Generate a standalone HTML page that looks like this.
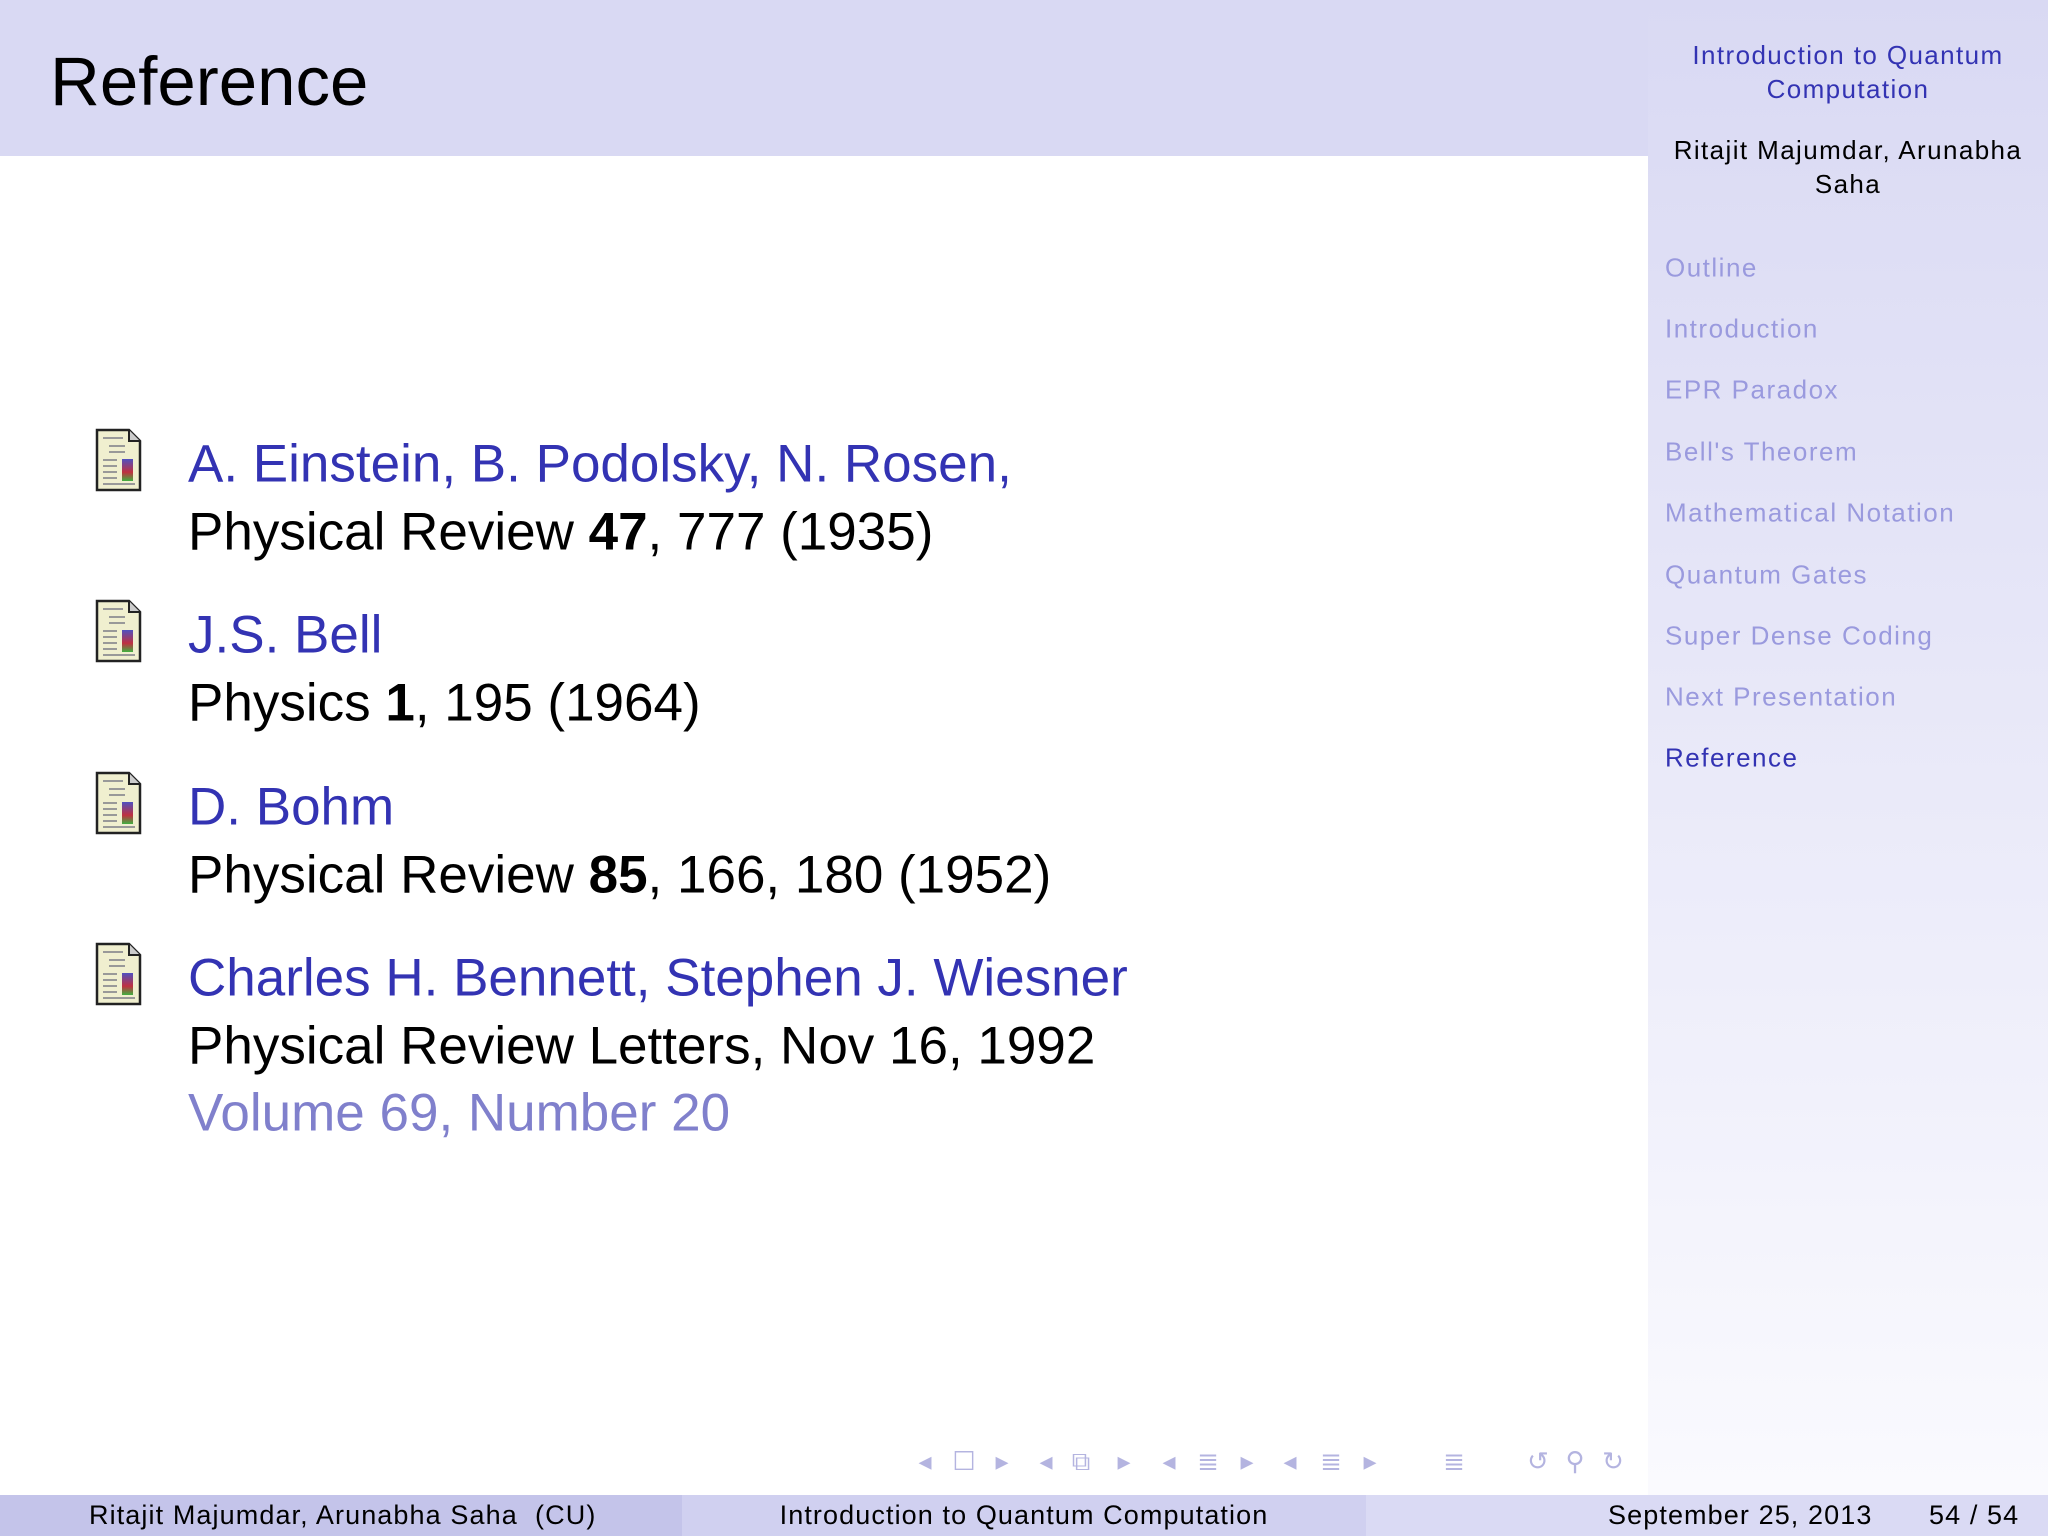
<!DOCTYPE html>
<html><head><meta charset="utf-8"><style>
*{margin:0;padding:0}
body{width:2048px;height:1536px;position:relative;background:#fff;font-family:"Liberation Sans",sans-serif;overflow:hidden}
.a{position:absolute;white-space:nowrap}
#hdr{left:0;top:0;width:1648px;height:156px;background:#d9d9f3}
#side{left:1648px;top:0;width:400px;height:1495px;background:linear-gradient(#d9d9f3 0%,#e4e4f7 35%,#fafafe 100%)}
.nav{left:1665px;font-size:26px;letter-spacing:1.5px;color:#9a9ade;transform:translateY(-50%)}
.ln{left:188px;font-size:53px;transform:translateY(-50%);color:#000}
.bl{color:#3333b3}
.ft{top:1495px;height:41px;line-height:41px;font-size:27px;letter-spacing:1.1px;color:#000}
.ic{position:absolute;left:95px;width:47px;height:64px}
.ni{position:absolute;top:1446px;font-size:26px;color:#b4b4e0;transform:translateX(-50%)}
</style></head><body>
<div class="a" id="hdr"></div>
<div class="a" style="left:50px;top:42px;font-size:69px;color:#000">Reference</div>
<div class="a" id="side"></div>
<div class="a" style="left:1648px;width:400px;top:38px;text-align:center;font-size:26px;letter-spacing:1.4px;line-height:34px;color:#3333b3;white-space:normal">Introduction to Quantum<br>Computation</div>
<div class="a" style="left:1648px;width:400px;top:133px;text-align:center;font-size:26px;letter-spacing:1.4px;line-height:34px;color:#000;white-space:normal">Ritajit Majumdar, Arunabha<br>Saha</div>
<div class="a nav" style="top:268px">Outline</div>
<div class="a nav" style="top:329px">Introduction</div>
<div class="a nav" style="top:390px">EPR Paradox</div>
<div class="a nav" style="top:452px">Bell's Theorem</div>
<div class="a nav" style="top:513px">Mathematical Notation</div>
<div class="a nav" style="top:575px">Quantum Gates</div>
<div class="a nav" style="top:636px">Super Dense Coding</div>
<div class="a nav" style="top:697px">Next Presentation</div>
<div class="a nav" style="top:758px;color:#3333b3">Reference</div>

<svg width="0" height="0" style="position:absolute"><defs>
<linearGradient id="g" x1="0" y1="0" x2="0" y2="1"><stop offset="0" stop-color="#5050c0"/><stop offset=".6" stop-color="#c03040"/><stop offset="1" stop-color="#40b040"/></linearGradient>
<g id="doc"><path d="M2 2H34L45 13V62H2Z" fill="#f0efcf" stroke="#222" stroke-width="2.5"/><path d="M34 2V13H45" fill="#ccc" stroke="#222" stroke-width="2"/>
<g stroke="#999" stroke-width="2"><path d="M8 10H28M14 18H30M14 24H30M8 32H22M8 38H22M8 44H22M8 50H22M8 56H40"/></g><rect x="27" y="31" width="11" height="22" fill="url(#g)"/></g></defs></svg>
<svg class="ic" style="top:428px"><use href="#doc"/></svg>
<svg class="ic" style="top:599px"><use href="#doc"/></svg>
<svg class="ic" style="top:771px"><use href="#doc"/></svg>
<svg class="ic" style="top:942px"><use href="#doc"/></svg>

<div class="a ln bl" style="top:464px">A. Einstein, B. Podolsky, N. Rosen,</div>
<div class="a ln" style="top:532px">Physical Review <b>47</b>, 777 (1935)</div>
<div class="a ln bl" style="top:635px">J.S. Bell</div>
<div class="a ln" style="top:703px">Physics <b>1</b>, 195 (1964)</div>
<div class="a ln bl" style="top:807px">D. Bohm</div>
<div class="a ln" style="top:875px">Physical Review <b>85</b>, 166, 180 (1952)</div>
<div class="a ln bl" style="top:978px">Charles H. Bennett, Stephen J. Wiesner</div>
<div class="a ln" style="top:1046px">Physical Review Letters, Nov 16, 1992</div>
<div class="a ln" style="top:1113px;color:#8080cc">Volume 69, Number 20</div>

<span class="ni" style="left:925px">◂</span><span class="ni" style="left:964px">☐</span><span class="ni" style="left:1002px">▸</span>
<span class="ni" style="left:1046px">◂</span><span class="ni" style="left:1081px">⧉</span><span class="ni" style="left:1124px">▸</span>
<span class="ni" style="left:1169px">◂</span><span class="ni" style="left:1208px">≣</span><span class="ni" style="left:1247px">▸</span>
<span class="ni" style="left:1290px">◂</span><span class="ni" style="left:1331px">≣</span><span class="ni" style="left:1370px">▸</span>
<span class="ni" style="left:1454px">≣</span>
<span class="ni" style="left:1538px">↺</span><span class="ni" style="left:1575px">⚲</span><span class="ni" style="left:1613px">↻</span>

<div class="a ft" style="left:0;width:682px;background:#c4c4ea"><span style="margin-left:89px">Ritajit Majumdar, Arunabha Saha&nbsp; (CU)</span></div>
<div class="a ft" style="left:682px;width:684px;background:#d0d0f0;text-align:center">Introduction to Quantum Computation</div>
<div class="a ft" style="left:1366px;width:682px;background:#dadaf4"><span style="position:absolute;left:242px">September 25, 2013</span><span style="position:absolute;left:563px">54 / 54</span></div>
</body></html>
